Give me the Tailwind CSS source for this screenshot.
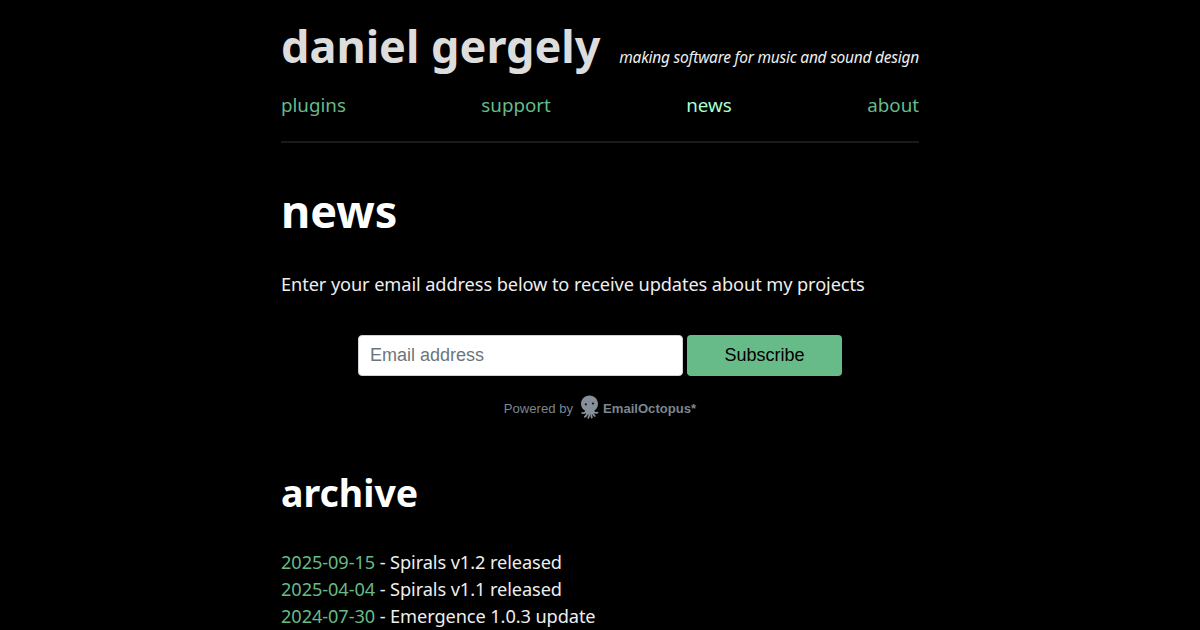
<!DOCTYPE html>
<html lang="en">
<head>
    <meta charset="UTF-8">
    <meta name="viewport" content="width=device-width, initial-scale=1.0">
    <title>daniel gergely - news</title>
    <script src="https://cdn.jsdelivr.net/npm/@tailwindcss/browser@4"></script>
</head>
<body class="bg-black text-[#eee] font-['Noto_Sans',sans-serif] text-[18.2px] tracking-[-0.09px] leading-[27px] h-[630px] overflow-hidden">
    <div class="w-[638px] ml-[281px]">
        <header class="h-[143px] border-b-2 border-[#1a1a1a] pt-[14px] tracking-normal">
            <div class="flex justify-between items-baseline whitespace-nowrap h-[64px]">
                <p class="text-[45px] leading-[64px] font-bold text-[#ddd]">daniel gergely</p>
                <p class="text-[15.5px] tracking-[-0.24px] italic">making software for music and sound design</p>
            </div>
            <nav class="flex justify-between mt-[13px] text-[18.75px] text-[#6b8]">
                <a href="#">plugins</a>
                <a href="#">support</a>
                <a href="#" class="text-[#afc]">news</a>
                <a href="#">about</a>
            </nav>
        </header>

        <h1 class="mt-[36px] text-[45px] leading-[64px] tracking-normal font-bold text-white">news</h1>
        <p class="mt-[28px]">Enter your email address below to receive updates about my projects</p>

        <form class="flex gap-1 mt-[37px] ml-[77px] font-['Liberation_Sans',sans-serif] text-[18px] tracking-normal">
            <input type="email" placeholder="Email address" class="w-[325px] h-[41px] px-[11px] bg-white border border-[#ced4da] rounded-[4px] placeholder:text-[#6c757d]">
            <button type="button" class="w-[155px] h-[41px] bg-[#6b8] text-black rounded-[4px]">Subscribe</button>
        </form>
        <div class="flex items-center justify-center mt-[18px] h-[28px] font-['Liberation_Sans',sans-serif] text-[13.1px] tracking-normal text-[#7c868f]">
            <span>Powered by</span>
            <svg class="w-[19px] h-[24px] ml-[7px] mr-1 -mt-[3px]" viewBox="0 0 19 24">
                <path d="M9.500.5C4.500.5 1 4.200 1 9c0 3.500 2 5.500 4.500 7l.5 3h7l.7-3c2.600-1.500 4.300-3.500 4.300-7 0-4.800-3.500-8.500-8.500-8.500z" fill="#85909a"/>
                <path d="M6 16c-.5 2-2 2.500-3.800 2M7.300 17c0 2.500-1 4-2.500 4.700M9.300 17c.2 3-.2 4.500-1 5.800M11.200 17c0 3 .1 4.500.6 5.500M12.800 17c.2 2 .8 3.500 2 4M13.500 16c.6 1.800 2 2.300 4 1.700" fill="none" stroke="#85909a" stroke-width="1.800" stroke-linecap="round"/>
                <circle cx="5.800" cy="9.300" r="1.100" fill="#111"/>
                <circle cx="13" cy="8.500" r="1.100" fill="#111"/>
            </svg>
            <b>EmailOctopus*</b>
        </div>

        <h2 class="mt-[44px] text-[37.5px] leading-[54px] tracking-normal font-bold text-white">archive</h2>
        <ul class="mt-[29px] leading-[26.8px]">
            <li><a href="#" class="text-[#6b8]">2025-09-15</a> - Spirals v1.2 released</li>
            <li><a href="#" class="text-[#6b8]">2025-04-04</a> - Spirals v1.1 released</li>
            <li><a href="#" class="text-[#6b8]">2024-07-30</a> - Emergence 1.0.3 update</li>
        </ul>
    </div>
</body>
</html>
